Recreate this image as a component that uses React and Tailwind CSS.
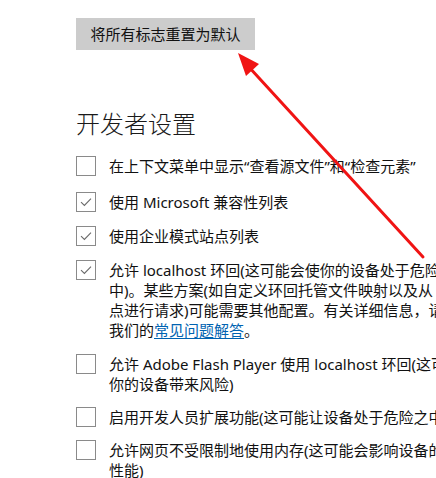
import React from "react";

const font = { fontFamily: '"Noto Sans", "Noto Sans CJK SC", sans-serif' };

function Box({ checked }) {
  return (
    <div className="w-[20px] h-[20px] shrink-0 border-[1.5px] border-[#8a8a8a] bg-white flex items-center justify-center">
      {checked && (
        <svg width="14" height="14" viewBox="0 0 14 14" fill="none">
          <path d="M2 7.2 L5.4 10.4 L12 3.6" stroke="#6a6a6a" strokeWidth="1.1" />
        </svg>
      )}
    </div>
  );
}

function Row({ checked, lines, className = "" }) {
  return (
    <div className={`flex items-start ${className}`}>
      <Box checked={checked} />
      <div className="ml-[13px] text-[15px] leading-[20px] text-[#111]">
        {lines.map((l, i) => (
          <div key={i} className="whitespace-nowrap">
            {l}
          </div>
        ))}
      </div>
    </div>
  );
}

export default function App() {
  return (
    <div className="relative w-[436px] h-[478px] overflow-hidden bg-white" style={font}>
      <div className="pt-[18px] pl-[76px] flex flex-col">
        <div className="self-start h-[32px] w-[179px] bg-[#cccccc] text-[15px] text-[#111] flex items-center justify-center">
          将所有标志重置为默认
        </div>
        <h2 className="mt-[58px] h-[32px] leading-[32px] text-[24px] font-light text-[#1a1a1a]">
          开发者设置
        </h2>
        <div className="mt-[16px] flex flex-col gap-[14px]">
          <Row lines={["在上下文菜单中显示“查看源文件”和“检查元素”"]} />
          <Row checked lines={["使用 Microsoft 兼容性列表"]} className="mt-[2px]" />
          <Row checked lines={["使用企业模式站点列表"]} />
          <Row
            checked
            lines={[
              "允许 localhost 环回(这可能会使你的设备处于危险之",
              "中)。某些方案(如自定义环回托管文件映射以及从 Intranet 站",
              "点进行请求)可能需要其他配置。有关详细信息，请参阅",
              <span key="l">
                我们的
                <span className="text-[#0063b1] underline underline-offset-2">常见问题解答</span>。
              </span>,
            ]}
          />
          <Row lines={["允许 Adobe Flash Player 使用 localhost 环回(这可能会给", "你的设备带来风险)"]} />
          <Row lines={["启用开发人员扩展功能(这可能让设备处于危险之中)"]} className="mt-[-1px]" />
          <Row lines={["允许网页不受限制地使用内存(这可能会影响设备的", "性能)"]} className="mt-[-1px]" />
        </div>
      </div>
      <svg className="absolute left-0 top-0 pointer-events-none" width="436" height="478" viewBox="0 0 436 478">
        <line x1="423" y1="257" x2="248" y2="66" stroke="#f01414" strokeWidth="3" strokeLinecap="round" />
        <polygon points="238,53 259,64 246,76" fill="#f01414" />
      </svg>
    </div>
  );
}
